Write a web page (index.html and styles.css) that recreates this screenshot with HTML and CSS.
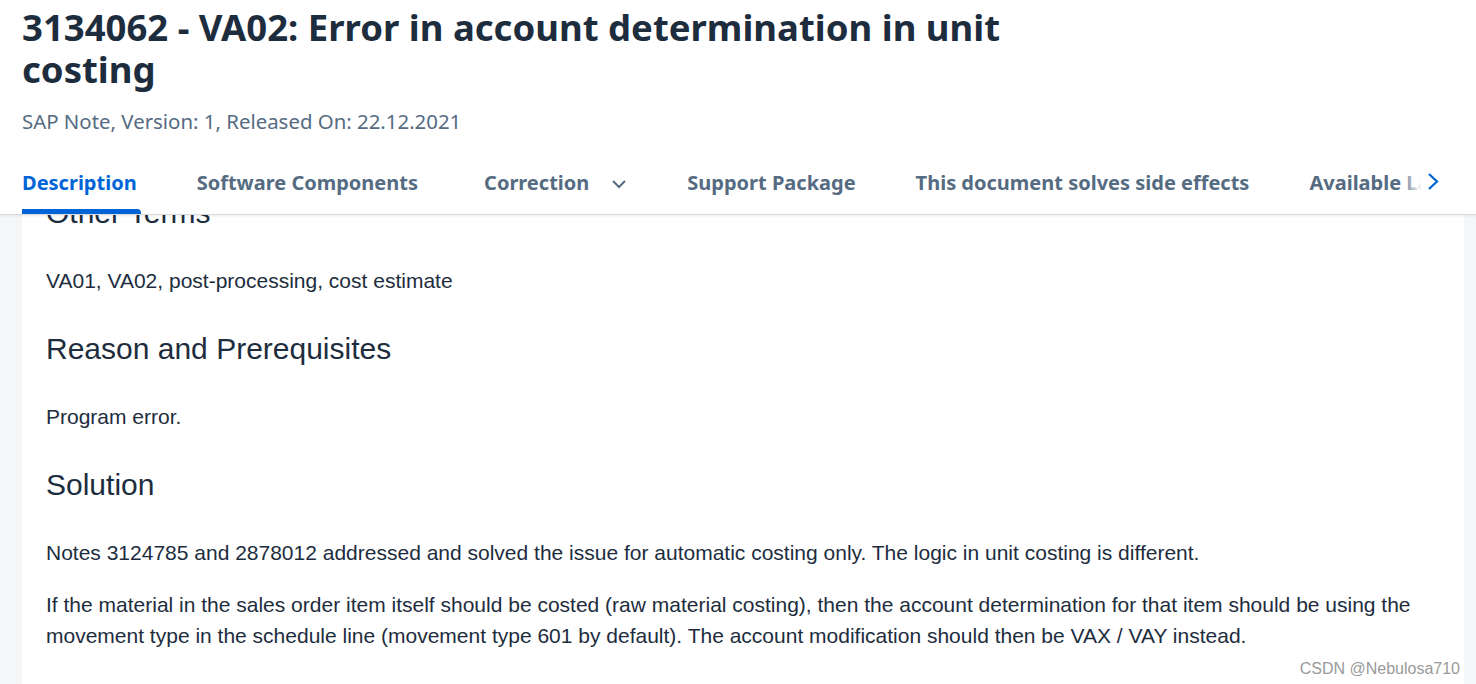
FILE: index.html
```html
<!DOCTYPE html>
<html>
<head>
<meta charset="utf-8">
<link rel="stylesheet" href="styles.css">
</head>
<body>
<div class="page">
  <header class="header">
    <h1 class="title">3134062 - VA02: Error in account determination in unit costing</h1>
    <div class="subtitle">SAP Note, Version: 1, Released On: 22.12.2021</div>
    <nav class="tabs">
      <div class="tab active">Description</div>
      <div class="tab">Software Components</div>
      <div class="tab has-menu">Correction
        <svg class="chev-down" width="16" height="10" viewBox="0 0 16 10"><path d="M2 2 L8 8 L14 2" fill="none" stroke="#556b82" stroke-width="2"/></svg>
      </div>
      <div class="tab">Support Package</div>
      <div class="tab">This document solves side effects</div>
      <div class="tab">Available Languages</div>
      <div class="fade"></div>
      <svg class="chev-right" width="14" height="19" viewBox="0 0 14 19"><path d="M3 2 L11 9.5 L3 17" fill="none" stroke="#0064d9" stroke-width="2.2"/></svg>
    </nav>
  </header>
  <main class="main">
    <section class="panel">
      <h2 class="heading first">Other Terms</h2>
      <p class="text">VA01, VA02, post-processing, cost estimate</p>
      <h2 class="heading">Reason and Prerequisites</h2>
      <p class="text">Program error.</p>
      <h2 class="heading">Solution</h2>
      <p class="text">Notes 3124785 and 2878012 addressed and solved the issue for automatic costing only. The logic in unit costing is different.</p>
      <p class="text">If the material in the sales order item itself should be costed (raw material costing), then the account determination for that item should be using the movement type in the schedule line (movement type 601 by default). The account modification should then be VAX / VAY instead.</p>
    </section>
  </main>
  <div class="watermark">CSDN @Nebulosa710</div>
</div>
</body>
</html>
```
FILE: styles.css
```css
* { box-sizing: border-box; }
html, body { margin: 0; padding: 0; }
body {
  width: 1476px;
  height: 684px;
  overflow: hidden;
  background: #f5f6f7;
  font-family: "Liberation Sans", Arial, sans-serif;
}
.page {
  position: relative;
  width: 1476px;
  height: 684px;
  display: flex;
  flex-direction: column;
}
.header {
  background: #ffffff;
  padding: 6px 0 0 22px;
  border-bottom: 1px solid #d9dadc;
  box-shadow: 0 1px 3px rgba(0,0,0,0.08);
  position: relative;
  z-index: 2;
  flex: none;
}
.title {
  margin: 0;
  width: 1010px;
  font-family: "Noto Sans", sans-serif;
  font-weight: 700;
  font-size: 36.5px;
  line-height: 42px;
  color: #1d2d3e;
}
.subtitle {
  margin-top: 18px;
  font-family: "Noto Sans", sans-serif;
  font-size: 20.4px;
  line-height: 26px;
  color: #556b82;
}
.tabs {
  margin-top: 20px;
  height: 60px;
  display: flex;
  align-items: stretch;
  gap: 60px;
  position: relative;
  overflow: hidden;
  white-space: nowrap;
}
.tab {
  font-family: "Noto Sans", sans-serif;
  font-weight: 700;
  font-size: 20px;
  line-height: 26px;
  color: #556b82;
  position: relative;
  padding-top: 16px;
  display: flex;
  align-items: flex-start;
  flex: none;
}
.tab.has-menu { margin-left: 6px; }
.tab.active { color: #0064d9; }
.tab.active::after {
  content: "";
  position: absolute;
  left: -5px;
  right: -4px;
  bottom: 0;
  height: 5px;
  background: #0064d9;
  border-radius: 4px 4px 0 0;
}
.chev-down { margin-left: 22px; margin-top: 9px; }
.fade {
  position: absolute;
  top: 0;
  left: 1378px;
  width: 100px;
  height: 58px;
  background: linear-gradient(to right, rgba(255,255,255,0), #ffffff 22px);
}
.chev-right {
  position: absolute;
  top: 18px;
  left: 1404px;
}
.main {
  flex: 1;
  overflow: hidden;
  padding: 0 12px 0 22px;
}
.panel {
  display: flow-root;
  background: #ffffff;
  height: 100%;
  padding: 0 24px;
  color: #1d2d3e;
}
.heading {
  margin: 35px 0 0 0;
  font-weight: 400;
  font-size: 30px;
  line-height: 36px;
}
.heading.first { margin-top: -20px; }
.text {
  margin: 34px 0 0 0;
  font-size: 21px;
  line-height: 31px;
}
.text + .text { margin-top: 21px; }
.watermark {
  position: absolute;
  right: 16px;
  bottom: 6px;
  font-size: 16px;
  color: #9a9a9a;
  font-family: "Liberation Sans", Arial, sans-serif;
}
```
